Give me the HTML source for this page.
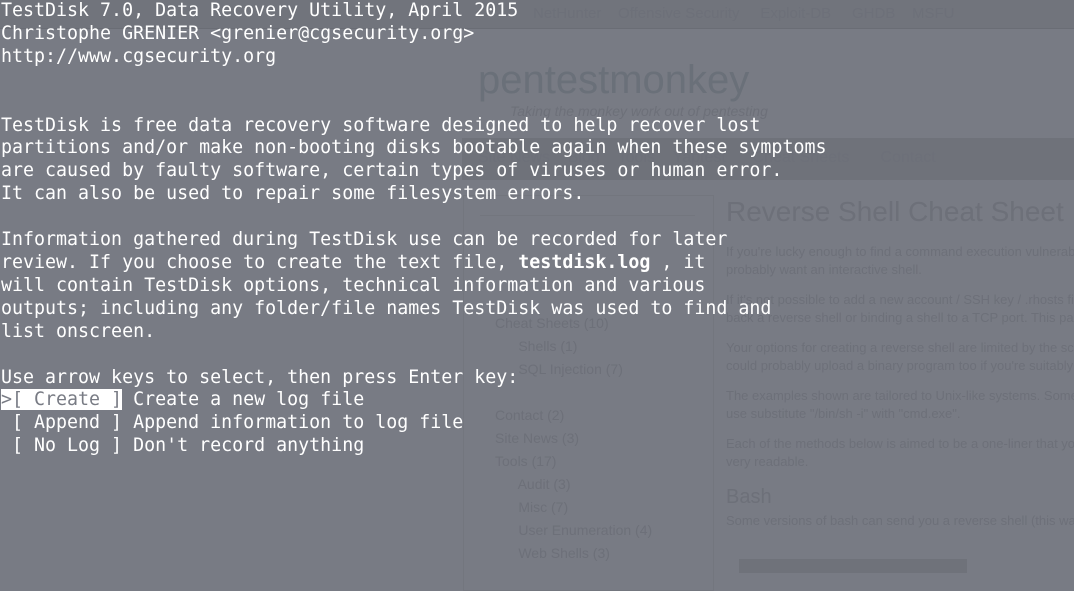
<!DOCTYPE html>
<html><head><meta charset="utf-8"><style>
html,body{margin:0;padding:0;}
body{width:1074px;height:589px;overflow:hidden;background:#787b84;position:relative;font-family:"Liberation Sans",sans-serif;}
.bg{position:absolute;color:#6d7079;white-space:nowrap;}
.p{position:absolute;left:726px;color:#6d7079;white-space:nowrap;font-size:13px;line-height:18px;}
.term{position:absolute;left:1px;top:0;font-family:"DejaVu Sans Mono",monospace;font-size:18.3px;line-height:22.9px;color:#fff;white-space:pre;margin:0;}
.sel{background:#fff;color:#787b84;}
b{font-weight:bold;}
</style></head><body>
<div style="position:absolute;left:0;top:0;width:1074px;height:28px;background:#71747c;"></div>
<div style="position:absolute;left:0;top:28px;width:1074px;height:1px;background:#6a6d75;"></div>
<div class="bg" style="left:533px;top:5px;font-size:15px;">NetHunter &nbsp; &nbsp;Offensive Security &nbsp; &nbsp; Exploit-DB &nbsp; &nbsp; GHDB &nbsp; &nbsp;MSFU</div>
<div class="bg" style="left:478px;top:58px;font-size:40px;color:#6a7079;">pentestmonkey</div>
<div class="bg" style="left:510px;top:103px;font-size:14px;font-style:italic;">Taking the monkey work out of pentesting</div>
<div style="position:absolute;left:462px;top:138px;width:612px;height:42px;background:#6f727a;"></div>
<div class="bg" style="left:478px;top:149px;font-size:16px;">Site News &nbsp; &nbsp;Blog &nbsp; &nbsp;Tools &nbsp; &nbsp;Yaptest &nbsp; &nbsp; &nbsp;Cheat Sheets &nbsp; &nbsp; &nbsp; Contact</div>
<div style="position:absolute;left:463px;top:195px;width:249px;height:394px;border:1px solid #73767e;"></div>
<div style="position:absolute;left:480px;top:215px;width:215px;height:1px;background:#73767e;"></div>
<div class="bg" style="left:726px;top:196px;font-size:28px;">Reverse Shell Cheat Sheet</div>
<div class="p" style="top:243px;">If you're lucky enough to find a command execution vulnerability<br>probably want an interactive shell.</div>
<div class="p" style="top:291px;">If it's not possible to add a new account / SSH key / .rhosts file<br>back a reverse shell or binding a shell to a TCP port. This page</div>
<div class="p" style="top:339px;">Your options for creating a reverse shell are limited by the scripting<br>could probably upload a binary program too if you're suitably</div>
<div class="p" style="top:387px;">The examples shown are tailored to Unix-like systems. Some<br>use substitute "/bin/sh -i" with "cmd.exe".</div>
<div class="p" style="top:435px;">Each of the methods below is aimed to be a one-liner that you<br>very readable.</div>
<div class="bg" style="left:726px;top:486px;font-size:20px;">Bash</div>
<div class="p" style="top:512px;">Some versions of bash can send you a reverse shell (this was</div>
<div style="position:absolute;left:739px;top:559px;width:228px;height:14px;background:#6f727a;"></div>
<div class="bg" style="left:495px;top:312px;font-size:14px;line-height:23px;">Cheat Sheets (10)<br>&nbsp; &nbsp; &nbsp; Shells (1)<br>&nbsp; &nbsp; &nbsp; SQL Injection (7)<br><br>Contact (2)<br>Site News (3)<br>Tools (17)<br>&nbsp; &nbsp; &nbsp; Audit (3)<br>&nbsp; &nbsp; &nbsp; Misc (7)<br>&nbsp; &nbsp; &nbsp; User Enumeration (4)<br>&nbsp; &nbsp; &nbsp; Web Shells (3)</div>
<pre class="term">TestDisk 7.0, Data Recovery Utility, April 2015
Christophe GRENIER &lt;grenier@cgsecurity.org&gt;
http://www.cgsecurity.org


TestDisk is free data recovery software designed to help recover lost
partitions and/or make non-booting disks bootable again when these symptoms
are caused by faulty software, certain types of viruses or human error.
It can also be used to repair some filesystem errors.

Information gathered during TestDisk use can be recorded for later
review. If you choose to create the text file, <b>testdisk.log</b> , it
will contain TestDisk options, technical information and various
outputs; including any folder/file names TestDisk was used to find and
list onscreen.

Use arrow keys to select, then press Enter key:
<span class="sel">&gt;[ Create ]</span> Create a new log file
 [ Append ] Append information to log file
 [ No Log ] Don't record anything</pre>
</body></html>
